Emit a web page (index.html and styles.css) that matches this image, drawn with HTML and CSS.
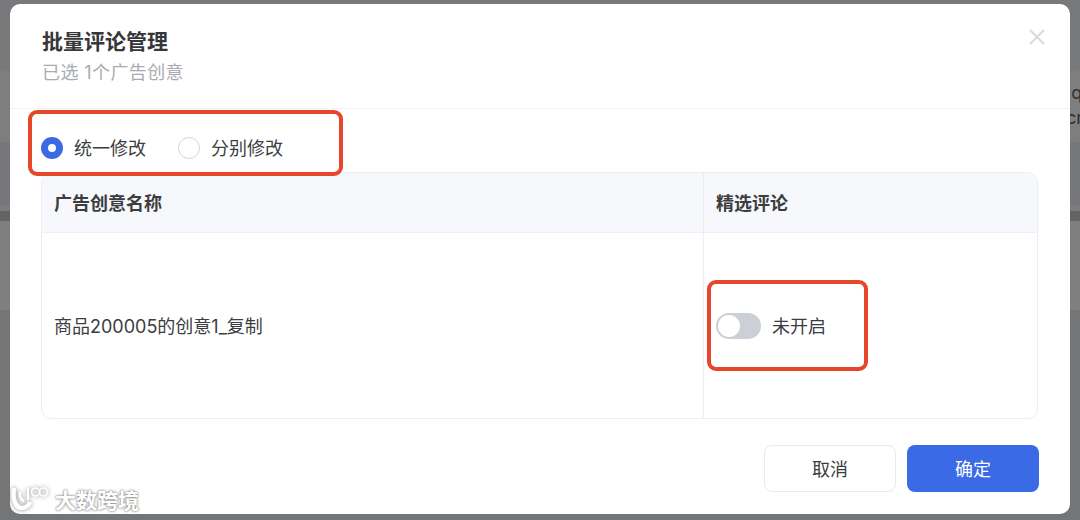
FILE: index.html
```html
<!DOCTYPE html>
<html lang="zh-CN">
<head>
    <meta charset="UTF-8">
    <title>批量评论管理</title>
    <link rel="stylesheet" href="styles.css">
</head>
<body>
    <div class="backdrop">
        <div class="band band-1"></div>
        <div class="band band-2"></div>
        <div class="band band-3"></div>
        <div class="band band-4"></div>
        <div class="band band-5"></div>
        <div class="band band-6"></div>
        <div class="band band-7"></div>
        <div class="peek peek-1">.q</div>
        <div class="peek peek-2">cr</div>
    </div>

    <div class="modal">
        <div class="modal-header">
            <h1 class="modal-title">批量评论管理</h1>
            <div class="modal-sub">已选 1个广告创意</div>
            <svg class="close" width="16" height="16" viewBox="0 0 16 16">
                <path d="M1 1L15 15M15 1L1 15" stroke="#d9dadd" stroke-width="2" fill="none"/>
            </svg>
        </div>

        <div class="modal-body">
            <div class="radios">
                <label class="radio"><span class="dot on"></span><span class="text">统一修改</span></label>
                <label class="radio"><span class="dot"></span><span class="text">分别修改</span></label>
            </div>

            <div class="table">
                <div class="cell head"><span class="text">广告创意名称</span></div>
                <div class="cell head"><span class="text">精选评论</span></div>
                <div class="cell"><span class="text">商品200005的创意1_复制</span></div>
                <div class="cell">
                    <span class="switch"><span class="knob"></span></span>
                    <span class="text">未开启</span>
                </div>
            </div>
        </div>

        <div class="modal-footer">
            <button class="btn">取消</button>
            <button class="btn primary">确定</button>
        </div>

        <div class="mark mark-radios"></div>
        <div class="mark mark-switch"></div>

        <div class="watermark">
            <svg width="45" height="32" viewBox="0 0 45 32" fill="none">
                <path d="M4 8C2 20 6 28 12 28C16 28 19 25 20 22" stroke="#fff" stroke-width="4.5"/>
                <path d="M10 12C9 16 11 20 14 21" stroke="#fff" stroke-width="2.5"/>
                <path d="M18 8V20" stroke="#fff" stroke-width="2"/>
                <circle cx="25.5" cy="12" r="4" stroke="#fff" stroke-width="1.6"/>
                <circle cx="33.5" cy="12" r="4" stroke="#fff" stroke-width="1.6"/>
            </svg>
            <span>大数跨境</span>
        </div>
    </div>
</body>
</html>
```

FILE: styles.css
```css
* {
    box-sizing: border-box;
}
html, body {
    height: 100%;
}
body {
    margin: 0;
    padding: 4px 10px 6px;
    background-color: #7c7c7e;
    font-family: "Inter", "Noto Sans CJK SC", sans-serif;
    color: #3c3d40;
    overflow: hidden;
}
.backdrop {
    position: absolute;
    inset: 0;
    display: flex;
    flex-direction: column;
}
.band-1 {
    height: 70px;
    background-color: #78797b;
}
.band-2 {
    height: 72px;
    background-color: #7e7e7e;
}
.band-3 {
    height: 63px;
    background-color: #76777a;
}
.band-4 {
    height: 6px;
    background-color: #7c7c7c;
}
.band-5 {
    height: 10px;
    background-color: #636564;
}
.band-6 {
    height: 89px;
    background-color: #7f7f7f;
}
.band-7 {
    flex: 1;
    background-color: #747577;
}
.peek {
    position: absolute;
    left: 1066px;
    font-size: 18px;
    color: #303030;
}
.peek-1 {
    top: 82px;
}
.peek-2 {
    top: 107px;
}
.modal {
    position: relative;
    height: 510px;
    background-color: #fff;
    border-radius: 10px;
    overflow: hidden;
}
.modal-header {
    position: relative;
    height: 105px;
    padding: 24px 32px 0;
    border-bottom: 1px solid #f2f3f5;
}
.modal-title {
    margin: 0;
    font-size: 21px;
    line-height: 28px;
    font-weight: 600;
    color: #36373a;
}
.modal-sub {
    margin-top: 4px;
    font-size: 18px;
    line-height: 26px;
    letter-spacing: 0.4px;
    color: #a9abb0;
}
.close {
    position: absolute;
    top: 25px;
    right: 25px;
}
.modal-body {
    padding: 0 32px;
}
.text {
    padding-bottom: 2px;
}
.radios {
    display: flex;
    gap: 32px;
    height: 63px;
    margin-left: -1px;
    padding-top: 27px;
}
.radio {
    display: flex;
    align-items: center;
    gap: 11px;
    height: 24px;
    font-size: 18px;
}
.dot {
    width: 22px;
    height: 22px;
    border: 1px solid #d5d6da;
    border-radius: 50%;
    background-color: #fff;
}
.dot.on {
    border: 7px solid #3b6ae6;
}
.table {
    display: grid;
    grid-template-columns: 662px 1fr;
    grid-template-rows: 60px 185px;
    width: 997px;
    margin-left: -1px;
    border: 1px solid #eceef1;
    border-radius: 10px;
    overflow: hidden;
}
.cell {
    display: flex;
    align-items: center;
    padding: 0 12px;
    font-size: 18px;
}
.cell:nth-child(odd) {
    border-right: 1px solid #eceef1;
}
.cell.head {
    background-color: #f7f8fb;
    border-bottom: 1px solid #eff0f3;
    font-weight: 600;
}
.switch {
    display: flex;
    align-items: center;
    width: 45px;
    height: 26px;
    margin-right: 11px;
    padding: 2px;
    border-radius: 13px;
    background-color: #cdcfd6;
}
.knob {
    width: 22px;
    height: 22px;
    border-radius: 50%;
    background-color: #fff;
}
.modal-footer {
    display: flex;
    justify-content: flex-end;
    gap: 11px;
    padding: 26px 31px 0 32px;
}
.btn {
    width: 132px;
    height: 47px;
    padding-bottom: 3px;
    border: 1px solid #e9eaed;
    border-radius: 8px;
    background-color: #fff;
    font-family: inherit;
    font-size: 18px;
    color: #3c3d40;
}
.btn.primary {
    border: none;
    background-color: #3b6ae6;
    color: #fff;
}
.mark {
    position: absolute;
    border: 4px solid #e6472b;
    border-radius: 9px;
}
.mark-radios {
    left: 18px;
    top: 106px;
    width: 315px;
    height: 66px;
}
.mark-switch {
    left: 697px;
    top: 276px;
    width: 161px;
    height: 91px;
}
.watermark {
    position: absolute;
    left: 0;
    bottom: 0;
    display: flex;
    align-items: center;
    font-size: 21px;
    font-weight: 700;
    color: #fff;
    text-shadow: 0 0 3px #8d8d8d, 0 0 2px #8d8d8d;
}
.watermark span {
    padding-top: 6px;
}
.watermark svg {
    filter: drop-shadow(0 0 2px #8d8d8d);
}
```
